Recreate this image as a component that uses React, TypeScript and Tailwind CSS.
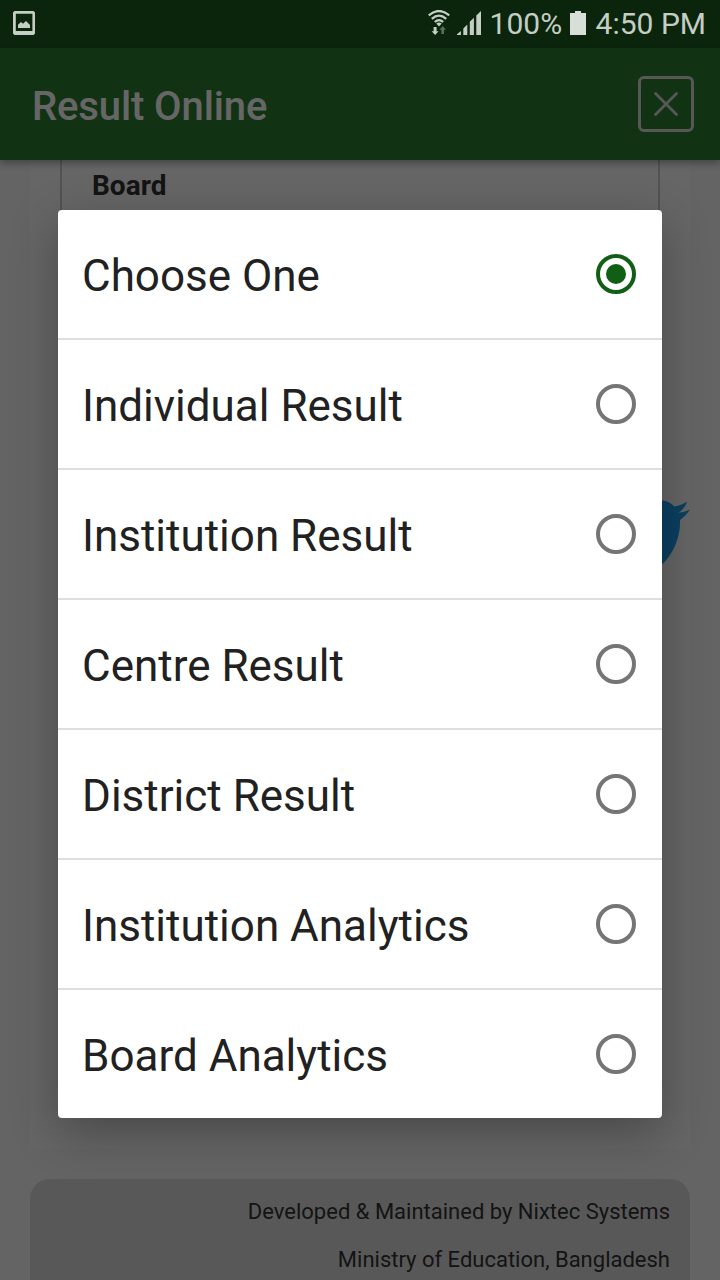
import { useState } from "react";

const options = [
  "Choose One",
  "Individual Result",
  "Institution Result",
  "Centre Result",
  "District Result",
  "Institution Analytics",
  "Board Analytics",
];

const StatusBar = () => {
  return (
    <div className="relative z-20 flex h-12 items-center pb-0.5 text-[#c4cec5]">
      <svg className="ml-3 size-6" viewBox="0 0 24 24" fill="currentColor">
        <path
          fillRule="evenodd"
          d="M2.5 0h19L23 1.5v21L21.5 24h-19L1 22.5v-21zM3.8 2.7V20h16.600V2.700z"
        />
        <path d="M6 17v-3.200l3-2.800 2 1.800 3-2.800 4 4V17z" />
      </svg>
      <div className="ml-auto flex h-full items-center">
        <svg className="h-[26px] w-[22px]" viewBox="0 0 22 26" fill="none">
          <g stroke="currentColor" strokeWidth="2.3">
            <path d="M.8 5.300Q11-3.200 21.200 5.300" />
            <path d="M3.800 8.800Q11 2.500 18.200 8.800" />
            <path d="M6.800 12Q11 8.200 15.200 12" />
          </g>
          <path d="M8.300 13.600Q11 11.600 13.700 13.600L11 16.600z" fill="currentColor" />
          <path d="M5.600 17h3v4.300h2L7.100 25l-3.500-3.700h2z" fill="currentColor" />
          <path d="M13.400 24v-4.300h-2l3.300-3.700 3.300 3.700h-2V24z" fill="#57705a" />
        </svg>
        <svg className="ml-[7px] h-6 w-6" viewBox="0 0 24 24" fill="currentColor">
          <path d="M0 24v-.8L3.900 20v4zM6.300 24v-6.600l4-4V24zM12.800 24V10.800l4.100-4.100V24zM19.300 24V4.600L24 0v24z" />
        </svg>
        <span className="ml-[9px] mt-0.5 w-[75px] whitespace-nowrap text-[30px] leading-none">100%</span>
        <svg className="ml-[5px] h-6 w-4" viewBox="0 0 16 24" fill="#d8dfd9">
          <path d="M5 0h6v2h5v22H0V2h5z" />
        </svg>
        <span className="ml-[10px] mr-[14px] mt-0.5 whitespace-nowrap text-[30px] leading-none">4:50 PM</span>
      </div>
    </div>
  );
};

const TwitterIcon = () => {
  return (
    <svg className="size-[98px]" viewBox="0 0 24 24" fill="#1da1f2">
      <path d="M23.953 4.57a10 10 0 01-2.825.775 4.958 4.958 0 002.163-2.723c-.951.555-2.005.959-3.127 1.184a4.92 4.92 0 00-8.384 4.482C7.69 8.095 4.067 6.13 1.64 3.162a4.822 4.822 0 00-.666 2.475c0 1.71.87 3.213 2.188 4.096a4.904 4.904 0 01-2.228-.616v.06a4.923 4.923 0 003.946 4.827 4.996 4.996 0 01-2.212.085 4.936 4.936 0 004.604 3.417 9.867 9.867 0 01-6.102 2.105c-.39 0-.779-.023-1.17-.067a13.995 13.995 0 007.557 2.209c9.053 0 13.998-7.496 13.998-13.985 0-.21 0-.42-.015-.63A9.935 9.935 0 0024 4.59z" />
    </svg>
  );
};

const Option = ({ label, checked, onSelect }) => {
  return (
    <li>
      <button
        role="radio"
        aria-checked={checked}
        onClick={onSelect}
        className="flex h-32 w-full items-center justify-between pl-6 pr-[26px] text-left"
      >
        <span className="mt-1 text-[44px] leading-none text-[#212121]">{label}</span>
        <span
          className={
            checked
              ? "flex size-10 items-center justify-center rounded-full border-4 border-[#115e15]"
              : "flex size-10 items-center justify-center rounded-full border-4 border-[#757575]"
          }
        >
          {checked && <span className="size-5 rounded-full bg-[#115e15]" />}
        </span>
      </button>
    </li>
  );
};

const App = () => {
  const [selected, setSelected] = useState("Choose One");

  return (
    <div className="relative flex h-[1280px] w-[720px] flex-col overflow-hidden bg-[#fafafa] font-['Roboto',sans-serif]">
      <div className="bg-[#1b5e20]">
        <StatusBar />
      </div>
      <header className="z-10 flex h-28 shrink-0 items-center justify-between bg-[#2e7d32] pl-8 pr-[26px] shadow-[0_3px_8px_rgba(0,0,0,0.35)]">
        <h1 className="mt-1.5 text-[40px] font-medium leading-none tracking-[-0.12px] text-white">Result Online</h1>
        <button className="flex size-14 items-center justify-center rounded-md border-[3px] border-[#dadada]">
          <svg className="size-7" viewBox="0 0 28 28" stroke="#dadada" strokeWidth="2.8" strokeLinecap="round">
            <path d="M3.5 3.5l21 21M24.5 3.5l-21 21" />
          </svg>
        </button>
      </header>

      <main className="mx-[30px] flex h-[989px] shrink-0 flex-col bg-white">
        <div className="mx-[30px] h-[331px] border-x-2 border-[#d0d0d0] px-[30px] pt-3">
          <h2 className="text-[28px] font-bold leading-none text-[#333]">Board</h2>
        </div>
        <div className="flex justify-end">
          <TwitterIcon />
        </div>
      </main>

      <footer className="mx-[30px] mt-[30px] h-[140px] shrink-0 rounded-t-[20px] bg-[#dcdcdc] px-5 pt-[9px] text-right text-[22px] leading-[48px] text-[#333]">
        <p>Developed & Maintained by Nixtec Systems</p>
        <p>Ministry of Education, Bangladesh</p>
      </footer>

      <div className="absolute inset-0 z-10 flex items-start justify-center bg-black/60 pt-[210px]">
        <ul
          role="radiogroup"
          className="w-[604px] divide-y-2 divide-[#dedede] rounded bg-white shadow-[0_14px_48px_rgba(0,0,0,0.3)]"
        >
          {options.map((option) => (
            <Option
              key={option}
              label={option}
              checked={option === selected}
              onSelect={() => setSelected(option)}
            />
          ))}
        </ul>
      </div>
    </div>
  );
};

export default App;
